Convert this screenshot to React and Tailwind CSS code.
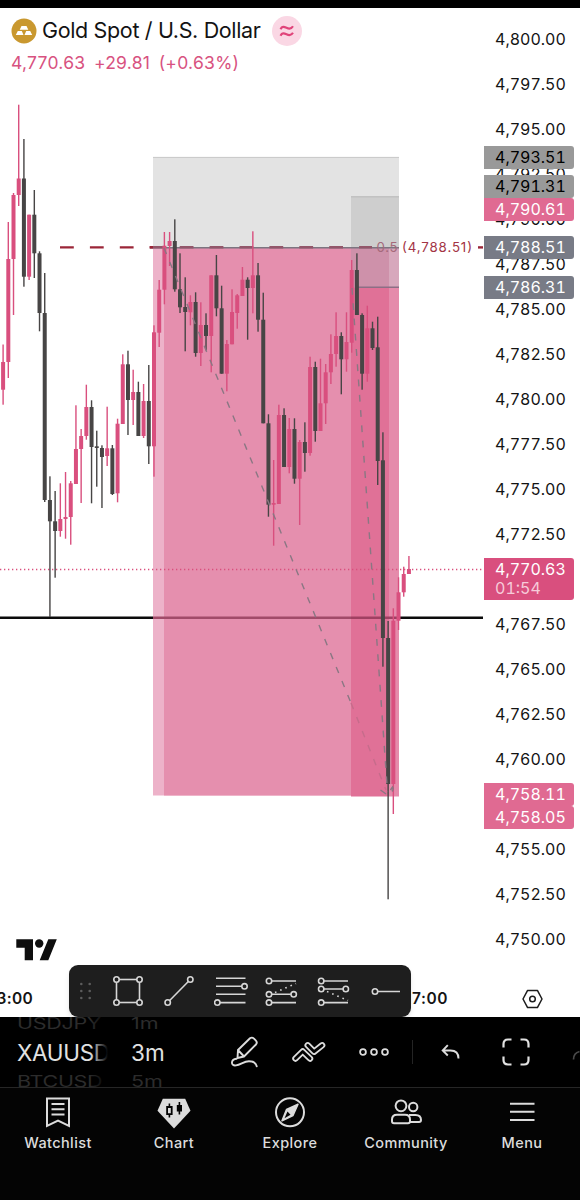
import React from 'react';

const PINK = '#d94f7e';
const DARK = '#474545';

// [high, body top, body bottom, low, down?]
const candles = [
    [344.5, 362, 389.7, 404.7], [222, 259, 362, 378], [193, 195, 259, 315], [104.7, 178.5, 195, 206],
    [139, 178.5, 276.7, 286.7, 1], [214.7, 214.7, 276.7, 280], [190, 214.7, 253.3, 278, 1], [251.3, 253.3, 313, 331.3, 1],
    [273, 313, 500, 502, 1], [476.3, 500, 521.3, 617, 1], [491, 521.3, 531, 577.7, 1], [483.3, 519, 531, 536.7],
    [472, 517, 519, 538.7], [481, 483.3, 517, 544.7], [405.3, 449, 484, 484], [429, 436, 449, 503],
    [384.7, 407, 436, 439.7], [400.3, 407, 447, 503.3, 1], [430.7, 446.3, 448, 486.7, 1], [445.3, 448, 457, 508, 1],
    [406.7, 448.3, 456, 466], [445, 448.3, 494, 495, 1], [418.7, 423.7, 493.3, 502.3], [354.3, 364.3, 424, 424],
    [350.7, 364.3, 400, 435, 1], [369.7, 392, 400, 425], [381.7, 392, 436, 436, 1], [384, 401, 436, 438],
    [365, 401, 446.3, 464, 1], [325.3, 332.3, 446.3, 476.7], [280, 289.7, 332.7, 347], [232, 245.7, 289.7, 304.3],
    [232, 241, 246, 266], [219.3, 241, 289.3, 291.7, 1], [253.3, 289.3, 307.3, 313, 1], [277.3, 307, 312, 351.3, 1],
    [295.3, 302, 312.3, 325.3], [292.3, 302, 353, 356.7, 1], [302.3, 325, 353, 366], [313.3, 325, 336, 350.3, 1],
    [275.3, 275.3, 336, 372.3], [255, 275.3, 308.3, 316.3, 1], [285.7, 308.3, 373.7, 373.7, 1], [340, 344, 373.7, 391.3],
    [289.3, 312, 344.3, 344.3], [294, 295.3, 313, 328.7], [267, 279.7, 296, 296], [277.3, 279.7, 288, 339.7, 1],
    [231.3, 275.3, 288, 313.3], [263, 275.3, 319.7, 331.7, 1], [292.7, 319.7, 423.3, 423.3, 1], [414.3, 423.3, 504.7, 516.7, 1],
    [460, 503, 504.7, 545.7], [404.7, 415, 504, 504], [408.3, 415, 467, 467, 1], [418, 429, 467, 473.3],
    [418.3, 429, 478.7, 483.7, 1], [440, 442, 478.7, 525], [422.3, 442, 453, 471.7, 1], [356.7, 367, 453, 455.7],
    [361.7, 367, 431, 441.7, 1], [358.7, 403.3, 431, 431], [364, 372.3, 403.3, 424], [334.3, 354, 372.3, 384],
    [312.3, 336, 354, 366.7], [332.3, 336, 359.3, 394.3, 1], [312.3, 342, 359.3, 371.7], [260, 270, 342.7, 352.7],
    [253.3, 270, 315, 315, 1], [313.3, 315, 373.7, 389.7, 1], [305.7, 328.3, 373.7, 381.7], [321.7, 328.3, 348, 350, 1],
    [316.7, 347.3, 461, 485, 1], [432.3, 460.3, 638, 666.7, 1], [621, 638, 784, 899.3, 1], [608.3, 620.7, 784, 814],
    [577.3, 592.3, 620.7, 630], [566.7, 574, 592.3, 596.7], [556, 569, 574, 574],
];

const prices = [
    '4,800.00', '4,797.50', '4,795.00', '4,792.50', '4,790.00', '4,787.50', '4,785.00',
    '4,782.50', '4,780.00', '4,777.50', '4,775.00', '4,772.50', '4,770.00', '4,767.50',
    '4,765.00', '4,762.50', '4,760.00', '4,757.50', '4,755.00', '4,752.50', '4,750.00',
];

const tags = [
    { price: '4,793.51', className: 'top-[138px] bg-[#999999] text-black' },
    { price: '4,791.31', className: 'top-[167px] bg-[#999999] text-black' },
    { price: '4,790.61', className: 'top-[190px] bg-[#e06a92] text-white' },
    { price: '4,788.51', className: 'top-[228px] bg-[#787b86] text-white' },
    { price: '4,786.31', className: 'top-[268px] bg-[#787b86] text-white' },
    { price: '4,758.11', className: 'top-[775px] bg-[#e06a92] text-white' },
    { price: '4,758.05', className: 'top-[798px] bg-[#e06a92] text-white' },
];

const Plot = () => (
    <svg className="block w-[484px] h-[972px] shrink-0" viewBox="0 8 484 972">
        <path d="M0 617.7H483" stroke="#0b0b0b" strokeWidth="2.6" />
        <path d="M60 247.4H154" stroke="#9b2638" strokeWidth="2.4" strokeDasharray="13.8 16.1" />

        {/* Position boxes */}
        <rect x="153" y="157" width="246" height="90.5" fill="#e3e3e3" />
        <path d="M153 157.4H399" stroke="#c9c9c9" strokeWidth="1" />
        <rect x="153" y="247.5" width="246" height="548" fill="#edb2c9" />
        <rect x="164" y="247.5" width="235" height="548" fill="#e58fae" />
        <rect x="351" y="196.5" width="48" height="51" fill="#cecece" />
        <path d="M351 196.8H399" stroke="#b9b9b9" strokeWidth="1" />
        <rect x="351" y="247.5" width="38" height="40" fill="#ce91aa" />
        <rect x="389" y="247.5" width="10" height="40" fill="#d7a8bc" />
        <rect x="351" y="287.5" width="38" height="509" fill="#e07197" />
        <rect x="389" y="287.5" width="10" height="509" fill="#e58bab" />
        <path d="M153 617.7H351" stroke="#a14b69" strokeWidth="2.6" />
        <path d="M351 617.7H399" stroke="#a04062" strokeWidth="2.6" />
        <path d="M153 247.8H399" stroke="#7d7580" strokeWidth="1.4" />
        <path d="M149.8 247.2H372" stroke="#93566a" strokeWidth="2.4" strokeDasharray="13.8 16.1" />
        <path d="M149.8 247.2H153" stroke="#9b2638" strokeWidth="2.4" />
        <path d="M355 287.3H399" stroke="#8d6f85" strokeWidth="1.5" />
        <path d="M478 247.4H483" stroke="#9b2638" strokeWidth="2.4" />

        <path d="M0 569.5H483" stroke="#d94f7e" strokeWidth="1.3" strokeDasharray="1.3 2.7" />

        {candles.map(([high, top, bottom, low, down], i) => {
            const x = 3.1 + i * 5.203;
            const color = down ? DARK : PINK;
            return (
                <g key={i} fill={color}>
                    <rect x={x - 0.7} y={high} width="1.4" height={low - high} />
                    <rect x={x - 2} y={top} width="4" height={bottom - top} />
                </g>
            );
        })}

        {/* Trade direction lines */}
        <g fill="none" stroke="#8a7783" strokeWidth="1.4">
            <path d="M164 248L351 703" strokeDasharray="6.6 8.5" />
            <path d="M351 703L386 790" stroke="#c66c8b" strokeDasharray="6.6 8.5" />
            <path d="M352 288L387.5 792" strokeDasharray="6.8 8.5" />
            <path d="M380.5 790l5.500 4M390.500 790l2-3q1.500 2-.5 4.500" />
        </g>

        <g className="font-['Inter',sans-serif] text-[13.300px]">
            <text x="376.500" y="252" fill="#a5697a" textLength="21">0.5</text>
            <text x="402" y="252" fill="#a33545" textLength="70">(4,788.51)</text>
        </g>
    </svg>
);

const PriceAxis = () => (
    <div className="relative flex-1 h-[972px] text-[16px] leading-[22px] tabular-nums text-[#141414]">
        <div className="pt-[7.500px] pl-[11px]">
            {prices.map((price) => (
                <div key={price} className="h-[45.03px] flex items-start pt-[12px]">{price}</div>
            ))}
        </div>
        {tags.map((tag) => (
            <div key={tag.price} className={`absolute left-0 w-[89.500px] h-[23px] pl-[11px] rounded-r-[3px] ${tag.className}`}>
                {tag.price}
            </div>
        ))}
        <div className="absolute left-0 top-[550px] w-[89.500px] h-[42px] pl-[11px] rounded-r-[3px] bg-[#d94f7e] text-white leading-[19px] pt-[2px]">
            <div>4,770.63</div>
            <div className="text-[#f6cbd9]">01:54</div>
        </div>
    </div>
);

const Header = () => (
    <div className="absolute left-[11px] top-[7px]">
        <div className="flex items-center h-[31px]">
            <svg className="w-[26px] h-[26px]" viewBox="0 0 26 26">
                <circle cx="13" cy="13" r="12.500" fill="#c9982f" />
                <path d="M10.500 8h5l1.800 3.800H8.700zM6.800 13h4l1.700 4H4.800zM15.200 13h4l2 4h-7.700z" fill="#fff" />
            </svg>
            <h1 className="ml-[5px] w-[219px] whitespace-nowrap text-[21.500px] tracking-[-0.35px] text-[#131313]">Gold Spot / U.S. Dollar</h1>
            <svg className="ml-[11px] w-[30px] h-[30px]" viewBox="0 0 30 30">
                <circle cx="15" cy="15" r="15" fill="#fad7e4" />
                <path d="M8.500 13.200c1.500-3.200 3.500-2.600 6-1.400s4.800 1.400 6.500-1.500M8.500 19.700c1.500-3.200 3.500-2.600 6-1.400s4.800 1.400 6.500-1.500" fill="none" stroke="#e0447a" strokeWidth="2.100" />
            </svg>
        </div>
        <div className="mt-[4.500px] flex gap-[8.500px] whitespace-nowrap text-[17.500px] leading-[24px] tracking-[0.27px] text-[#d8527f]">
            <span>4,770.63</span>
            <span>+29.81</span>
            <span>(+0.63%)</span>
        </div>
    </div>
);

const ToolIcon = ({ children }) => (
    <svg className="w-[34px] h-[34px] mr-[17.500px] shrink-0" viewBox="0 0 34 34" fill="#1e1e1e" stroke="#d6d6d6" strokeWidth="1.600">
        {children}
    </svg>
);

const DrawingBar = () => (
    <div className="absolute left-[69px] top-[957px] w-[342px] h-[52px] rounded-[9px] bg-[#1e1e1e] shadow-md flex items-center overflow-hidden">
        <svg className="w-[14px] h-[20px] ml-[9px] mr-[18.500px] shrink-0" viewBox="0 0 14 20" fill="#5c5c5c">
            {[3, 10, 17].map((y) => (
                <g key={y}>
                    <circle cx="3.300" cy={y} r="1.300" />
                    <circle cx="11.700" cy={y} r="1.300" />
                </g>
            ))}
        </svg>
        <ToolIcon>
            <rect x="5.500" y="5.500" width="23" height="23" />
            <circle cx="5.500" cy="5.500" r="2.700" /><circle cx="28.500" cy="5.500" r="2.700" />
            <circle cx="5.500" cy="28.500" r="2.700" /><circle cx="28.500" cy="28.500" r="2.700" />
        </ToolIcon>
        <ToolIcon>
            <path d="M5.700 28.500L28.300 5.500" />
            <circle cx="5.700" cy="28.500" r="2.700" /><circle cx="28.300" cy="5.500" r="2.700" />
        </ToolIcon>
        <ToolIcon>
            <path d="M2 4.300h29.500M2 12.300h29M2 20.300h29.500M3 28.600h28.500" />
            <circle cx="30.500" cy="12.300" r="2.700" /><circle cx="3.300" cy="28.600" r="2.700" />
        </ToolIcon>
        <ToolIcon>
            <path d="M4 7h27M4 20.300h25M4 28.600h27" />
            <path d="M10 18.500L31 9.500" strokeDasharray="1.600 4" />
            <circle cx="4" cy="7" r="2.700" /><circle cx="4" cy="20.300" r="2.700" />
            <circle cx="28.700" cy="20.300" r="2.700" /><circle cx="4" cy="28.600" r="2.700" />
        </ToolIcon>
        <ToolIcon>
            <path d="M4 7h27M4 15h25M4 28.600h27" />
            <path d="M10 17.500L31 26.500" strokeDasharray="1.600 4" />
            <circle cx="4.200" cy="7" r="2.700" /><circle cx="4.200" cy="15" r="2.700" />
            <circle cx="28.800" cy="15" r="2.700" /><circle cx="4.200" cy="28.600" r="2.700" />
        </ToolIcon>
        <ToolIcon>
            <path d="M7 17.500h25" />
            <circle cx="7" cy="17.500" r="2.700" />
        </ToolIcon>
    </div>
);

const TimeAxis = () => (
    <div className="h-[37px] flex items-center justify-between overflow-hidden text-[15.500px] font-semibold text-[#141414]">
        <span className="-ml-[10px] w-[43px] flex justify-end tracking-[0.3px]">13:00</span>
        <div className="flex items-center">
            <span className="w-[48px] flex justify-end tracking-[0.55px]">17:00</span>
            <svg className="ml-[74px] mr-[37px] w-[21px] h-[20px]" viewBox="0 0 21 20" fill="none" stroke="#1c1c1c" strokeWidth="1.500">
                <path d="M5.600 1.400h9.800l4.600 8.600-4.600 8.600H5.600L1 10z" strokeLinejoin="round" />
                <circle cx="10.500" cy="10" r="2.800" />
            </svg>
        </div>
    </div>
);

const Wheel = ({ items, className }) => (
    <div className={`h-full flex flex-col items-start justify-center overflow-hidden shrink-0 ${className}`}>
        <div className="text-[21.500px] leading-[29px] h-[29px] text-[#2c2c2c] scale-y-75 origin-center">{items[0]}</div>
        <div className="text-[22.500px] leading-[29px] h-[29px] text-[#e2e2e2]">{items[1]}</div>
        <div className="text-[21.500px] leading-[29px] h-[29px] text-[#2c2c2c] scale-y-75 origin-center">{items[2]}</div>
    </div>
);

const ChartToolbar = () => (
    <div className="relative h-[70px] bg-black flex items-center overflow-hidden">
        <div className="relative h-full">
            <Wheel items={['USDJPY', 'XAUUSD', 'BTCUSD']} className="ml-[17px] w-[91px] tracking-[-0.3px]" />
            <div className="absolute right-0 top-0 h-full w-[18px] bg-gradient-to-r from-transparent to-black" />
        </div>
        <Wheel items={['1m', '3m', '5m']} className="ml-[23px] w-[40px]" />
        <svg className="ml-[57px] w-[34px] h-[36px]" viewBox="0 0 34 36" fill="none" stroke="#dcdcdc" strokeWidth="1.900" strokeLinecap="round" strokeLinejoin="round">
            <path d="M9.500 24l.5-8L22 4.300q2-1.500 4 .3l1.700 1.700q2 2 .3 4.200L16 22.500zM10 16l6 6.500" />
            <path d="M8.500 24.800C2.500 25.500 2.500 32.300 8 31.400 13 30.500 16 27.300 21 27.300c4 0 7 2 7.700 5" />
        </svg>
        <svg className="ml-[28px] w-[38px] h-[28px]" viewBox="0 0 38 28" fill="none" strokeLinecap="round" strokeLinejoin="round">
            <g stroke="#dcdcdc" strokeWidth="6.400">
                <path d="M5.500 20.500l7.200-7 7.300 7" /><path d="M17.700 7.300l6.400 6.400 8-6.400" />
            </g>
            <g stroke="#000" strokeWidth="2.800">
                <path d="M5.500 20.500l7.200-7 7.300 7" /><path d="M17.700 7.300l6.400 6.400 8-6.400" />
            </g>
        </svg>
        <svg className="ml-[31px] w-[30px] h-[10px]" viewBox="0 0 30 10" fill="none" stroke="#dcdcdc" strokeWidth="1.800">
            <circle cx="4" cy="5" r="2.900" /><circle cx="15" cy="5" r="2.900" /><circle cx="26" cy="5" r="2.900" />
        </svg>
        <div className="ml-[23px] w-px h-[24px] bg-[#242424]" />
        <svg className="ml-[27.500px] w-[20px] h-[20px]" viewBox="0 0 20 20" fill="none" stroke="#dcdcdc" strokeWidth="1.900">
            <path d="M6.800 3.200L1.700 8.500l5.100 5M2 8.500h7.500c5 0 8 3 8 8" />
        </svg>
        <svg className="ml-[40px] w-[30px] h-[30px]" viewBox="0 0 30 30" fill="none" stroke="#e2e2e2" strokeWidth="2.200">
            <path d="M2.500 10.500V7q0-4.500 4.500-4.500h3.500M19.500 2.500H23q4.500 0 4.500 4.500v3.500M27.500 19.500V23q0 4.500-4.500 4.500h-3.500M10.500 27.500H7q-4.500 0-4.500-4.500v-3.500" />
        </svg>
        <svg className="absolute right-0 top-[29px] w-[10px] h-[16px]" viewBox="0 0 10 16" fill="none" stroke="#4a4a4a" strokeWidth="1.700">
            <path d="M3.500 13.500q0-6.500 6-8" />
        </svg>
    </div>
);

const NavItem = ({ label, children }) => (
    <div className="flex-1 flex flex-col items-center pt-[6px]">
        <svg className="w-[36px] h-[36px]" viewBox="0 0 36 36" fill="none" stroke="#dcdcdc" strokeWidth="2">{children}</svg>
        <span className="mt-[3px] text-[14.500px] leading-[20px] font-medium tracking-[0.4px] text-[#dcdcdc]">{label}</span>
    </div>
);

const BottomNav = () => (
    <nav className="flex-1 bg-[#040404] border-t border-[#262626] flex">
        <NavItem label="Watchlist">
            <path d="M7 4.500h22v27.300l-11-5.300-11 5.300z" />
            <path d="M11.500 10h13M11.500 15.300h13M11.500 20.600h13" />
        </NavItem>
        <NavItem label="Chart">
            <path d="M6.800 4.700h22.400l5.300 12L18 34.500 1.500 16.700z" fill="#dcdcdc" stroke="none" />
            <path d="M13.400 9.500v3M13.400 20.500v3M23.400 8v12.500" stroke="#040404" strokeWidth="1.600" />
            <path d="M11.100 13h4.600v7.200h-4.600z" stroke="#040404" strokeWidth="1.800" />
            <path d="M20.800 11h5.200v6.500h-5.200z" fill="#040404" stroke="none" />
        </NavItem>
        <NavItem label="Explore">
            <circle cx="18" cy="18.300" r="14" />
            <path d="M26 10.200l-5 11.300-11 5.300 4.500-11.300z" fill="#dcdcdc" stroke="#dcdcdc" strokeWidth="1.500" strokeLinejoin="round" />
            <path d="M12.500 24.300l3-6.800 3 3.200z" fill="#040404" stroke="none" />
        </NavItem>
        <NavItem label="Community">
            <circle cx="13" cy="11.800" r="5.400" /><circle cx="25.200" cy="13" r="4.200" />
            <path d="M4 27.200v-1.700q0-4.800 5-4.800h8q5 0 5 4.800v1.700q0 2-2 2H6q-2 0-2-2z" />
            <path d="M21 21h6.500q5.500 0 5.500 5 0 2-2 2h-9" />
        </NavItem>
        <NavItem label="Menu">
            <path d="M6 9.700h24.500M6 17.800h24.500M6 26h24.500" />
        </NavItem>
    </nav>
);

const App = () => {
    return (
        <div className="w-[580px] h-[1200px] flex flex-col bg-white overflow-hidden font-['Inter',sans-serif]">
            <div className="h-[8px] shrink-0 bg-black"></div>
            <section className="relative h-[1009px] shrink-0">
                <div className="flex">
                    <Plot />
                    <PriceAxis />
                </div>
                <TimeAxis />
                <Header />
                <svg className="absolute left-[16px] top-[931px] w-[42px] h-[22px]" viewBox="0 0 42 22" fill="#0e0e0e">
                    <path d="M.3.300h16.700v20.900H8.700V8.700H.3zM32.300.300h8.500L32.300 21.200h-8.600z" />
                    <circle cx="23.200" cy="4.500" r="4.200" />
                </svg>
                <DrawingBar />
            </section>
            <ChartToolbar />
            <BottomNav />
        </div>
    );
};

export default App;
